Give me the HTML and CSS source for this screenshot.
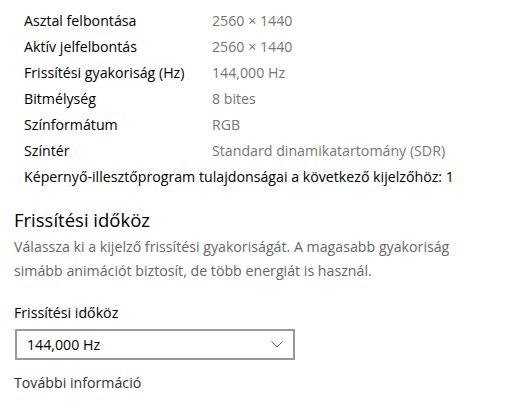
FILE: index.html
```html
<!DOCTYPE html>
<html lang="hu">
<head>
  <meta charset="UTF-8" />
  <title>Kijelző speciális beállításai</title>
  <link rel="stylesheet" href="styles.css">
</head>
<body>
  <div class="page">
    <div class="info-table">
      <div class="info-row"><span class="info-label">Asztal felbontása</span><span class="info-value">2560 × 1440</span></div>
      <div class="info-row"><span class="info-label">Aktív jelfelbontás</span><span class="info-value">2560 × 1440</span></div>
      <div class="info-row"><span class="info-label">Frissítési gyakoriság (Hz)</span><span class="info-value">144,000 Hz</span></div>
      <div class="info-row"><span class="info-label">Bitmélység</span><span class="info-value">8 bites</span></div>
      <div class="info-row"><span class="info-label">Színformátum</span><span class="info-value">RGB</span></div>
      <div class="info-row"><span class="info-label">Színtér</span><span class="info-value">Standard dinamikatartomány (SDR)</span></div>
      <a class="adapter-link" href="#">Képernyő-illesztőprogram tulajdonságai a következő kijelzőhöz: 1</a>
    </div>

    <div class="section">
      <h2>Frissítési időköz</h2>
      <p class="desc">Válassza ki a kijelző frissítési gyakoriságát. A magasabb gyakoriság simább animációt biztosít, de több energiát is használ.</p>
      <label class="field-label">Frissítési időköz</label>
      <div class="select">
        <span>144,000 Hz</span>
        <svg class="chevron" width="12" height="7" viewBox="0 0 12 7"><path d="M0.5 0.5 L6 6 L11.5 0.5" fill="none" stroke="#666" stroke-width="1"/></svg>
      </div>
      <a class="more-link" href="#">További információ</a>
    </div>
  </div>
</body>
</html>
```

FILE: styles.css
```css
body {
  margin: 0;
  background: #fff;
  font-family: 'Open Sans', 'Noto Sans', sans-serif;
  font-size: 14.2px;
  color: #000;
}
.page {
  padding: 8px 0 0 14px;
}
.info-table {
  padding-left: 10px;
}
.info-row {
  display: flex;
  height: 26px;
  line-height: 26px;
}
.info-label {
  width: 188px;
}
.info-value {
  color: #767676;
}
.adapter-link {
  display: block;
  line-height: 26px;
  color: #000;
  text-decoration: none;
}
.section h2 {
  font-size: 18.5px;
  font-weight: 400;
  margin: 16px 0 1px;
  line-height: 28px;
}
.desc {
  margin: 0;
  color: #666;
  line-height: 24px;
  width: 450px;
}
.field-label {
  display: block;
  margin-top: 19px;
  line-height: 22px;
}
.select {
  margin: 5px 0 0 1px;
  width: 256px;
  height: 27px;
  border: 2px solid #999;
  display: flex;
  align-items: center;
  justify-content: space-between;
  padding: 0 10px;
  box-sizing: content-box;
}
.more-link {
  display: block;
  margin-top: 12px;
  color: #333;
  text-decoration: none;
  line-height: 22px;
}
```
